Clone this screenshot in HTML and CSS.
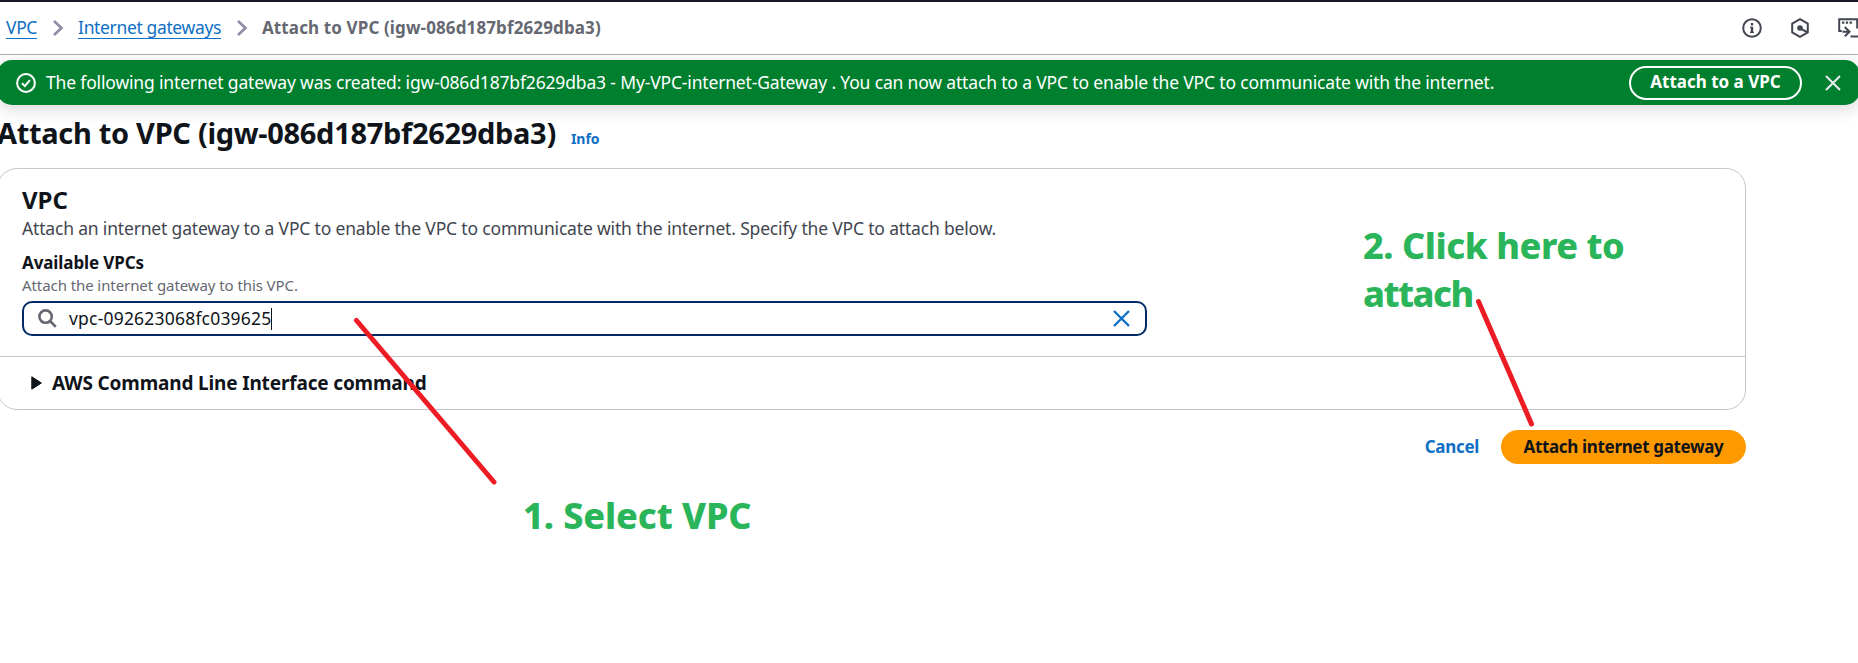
FILE: index.html
```
<!DOCTYPE html>
<html lang="en">
<head>
<meta charset="utf-8">
<title>Attach to VPC</title>
<link rel="stylesheet" href="styles.css">
</head>
<body>
<header class="topbar">
  <nav class="crumbs">
    <a class="crumb-link" href="#">VPC</a>
    <svg class="chevron" width="12" height="18" viewBox="0 0 12 18"><path d="M2 2l7.5 7L2 16"/></svg>
    <a class="crumb-link" href="#">Internet gateways</a>
    <svg class="chevron" width="12" height="18" viewBox="0 0 12 18"><path d="M2 2l7.5 7L2 16"/></svg>
    <span class="crumb-current">Attach to VPC (igw-086d187bf2629dba3)</span>
  </nav>
  <div class="tools">
    <svg width="20" height="20" viewBox="0 0 20 20"><circle cx="10" cy="10" r="8.8"/><path d="M10 8.8v6M10 5v2.4" stroke-width="2.4"/><path d="M8.2 9.4H10M8 14.3h4" stroke-width="1.2"/></svg>
    <svg width="20" height="20" viewBox="0 0 20 20"><path d="M10 1.2l7.8 4.3v9L10 18.8l-7.8-4.3v-9z"/><circle class="solid" cx="10" cy="10" r="2.8"/><path d="M11 10.8l6 3.2"/></svg>
    <svg width="21" height="20" viewBox="0 0 21 20"><path d="M3.8 13H1.2V1.2H19.2V10.5M12.5 18.5H21M4.5 13.7h6.5M6.8 9l4.7 4.7-4.7 4.5"/><path d="M4 4.7h2.3M7.8 4.7h2.3M11.6 4.7h2.3" stroke-width="2.3"/></svg>
  </div>
</header>

<section class="flash">
  <svg class="flash-icon" width="20" height="20" viewBox="0 0 20 20"><circle cx="10" cy="10" r="8.9"/><path d="M6 10.2l2.9 2.9 5-6"/></svg>
  <p class="flash-text">The following internet gateway was created: igw-086d187bf2629dba3 - My-VPC-internet-Gateway . You can now attach to a VPC to enable the VPC to communicate with the internet.</p>
  <button class="flash-button">Attach to a VPC</button>
  <svg class="flash-close" width="16" height="16" viewBox="0 0 16 16"><path d="M1 1l14 14M15 1L1 15"/></svg>
</section>

<main class="page">
  <div class="title-row">
    <h1 class="title">Attach to VPC (igw-086d187bf2629dba3)</h1>
    <a class="info" href="#">Info</a>
  </div>
  <section class="card">
    <div class="card-body">
      <h2 class="card-title">VPC</h2>
      <p class="card-desc">Attach an internet gateway to a VPC to enable the VPC to communicate with the internet. Specify the VPC to attach below.</p>
      <div class="label">Available VPCs</div>
      <div class="hint">Attach the internet gateway to this VPC.</div>
      <div class="field">
        <svg class="search" width="19" height="19" viewBox="0 0 19 19"><circle cx="7.6" cy="7.6" r="6.2"/><path d="M12 12l5.8 5.8"/></svg>
        <span class="value">vpc-092623068fc039625</span><span class="caret"></span>
        <svg class="clear" width="17" height="17" viewBox="0 0 17 17"><path d="M1 1l15 15M16 1L1 16"/></svg>
      </div>
    </div>
    <div class="card-footer">
      <svg width="11" height="14" viewBox="0 0 11 14"><path d="M.8.8v12.4L10.4 7z"/></svg>
      <span class="expand-label">AWS Command Line Interface command</span>
    </div>
  </section>
  <div class="actions">
    <a class="cancel" href="#">Cancel</a>
    <button class="primary">Attach internet gateway</button>
  </div>
</main>

<div class="note note-select">1. Select VPC</div>
<div class="note note-click"><span class="note-line">2. Click here to</span><br><span class="note-word">attach</span></div>
<svg class="pointers" width="1858" height="663" viewBox="0 0 1858 663"><path d="M356.5 320.5L494 482M1478.5 301.5L1531.5 424"/></svg>
</body>
</html>
```
FILE: styles.css
```
* { box-sizing: border-box; }
body {
  margin: 0;
  height: 663px;
  overflow: hidden;
  position: relative;
  background: #fff;
  color: #0f141a;
  font: 17px/22px "Noto Sans", sans-serif;
}
h1, h2, p { margin: 0; }
a { text-decoration: none; color: #0f6fc5; }
svg { display: block; flex: none; fill: none; overflow: visible; }
button { font: inherit; font-weight: 700; padding: 0; border: 0; white-space: nowrap; }

.topbar {
  display: flex;
  justify-content: space-between;
  align-items: center;
  height: 55px;
  padding-left: 6px;
  border-top: 2px solid #161826;
  border-bottom: 1px solid #b0b0ba;
}
.crumbs { display: flex; align-items: center; }
.crumb-link { border-bottom: 1px solid #0f6fc5; height: 22px; font-size: 17.5px; line-height: 21px; letter-spacing: -.36px; }
.chevron { margin: 0 14px 0 15px; stroke: #8c8ca3; stroke-width: 2.6; }
.crumb-current { color: #656871; font-weight: 700; letter-spacing: .12px; padding-bottom: 1px; }
.tools { display: flex; gap: 28px; margin-right: -1px; }
.tools svg { stroke: #424650; stroke-width: 2; }
.tools .solid { fill: #424650; stroke: none; }

.flash {
  display: flex;
  align-items: center;
  height: 45px;
  margin: 5px -2px 0 -3px;
  padding: 0 19px 0 19px;
  border-radius: 15px;
  background: #00802f;
  color: #fff;
  box-shadow: 0 4px 16px 1px rgba(0, 7, 22, .14);
}
.flash-icon { stroke: #fff; stroke-width: 2; }
.flash-text { flex: 1; padding: 0 0 2px 10px; font-size: 17.5px; letter-spacing: -.16px; white-space: nowrap; }
.flash-button {
  width: 173px;
  height: 34px;
  padding-bottom: 1px;
  border: 2px solid #fff;
  border-radius: 17px;
  background: transparent;
  color: #fff;
}
.flash-close { margin-left: 23px; stroke: #ebebf0; stroke-width: 2; }

.page { width: 1749px; margin: 8px 0 0 -3px; }
.title-row { display: flex; align-items: baseline; height: 40px; gap: 15px; }
.title { font-size: 29px; line-height: 40px; letter-spacing: -.31px; white-space: nowrap; }
.info { font-size: 14px; font-weight: 700; }

.card { margin-top: 15px; height: 242px; border: 1px solid #c6c6cd; border-radius: 20px; }
.card-body { height: 187px; padding: 16px 24px 0; }
.card-title { font-size: 24px; line-height: 30px; }
.card-desc { margin-top: 2px; color: #424650; font-size: 17.5px; letter-spacing: -.175px; }
.label { margin-top: 13px; font-weight: 700; letter-spacing: -.1px; }
.hint { margin-top: 2px; font-size: 15px; line-height: 18px; color: #656871; letter-spacing: -.08px; }
.field {
  display: flex;
  align-items: center;
  width: 1125px;
  height: 35px;
  margin-top: 7px;
  padding: 0 14px;
  border: 2px solid #002b66;
  border-radius: 10px;
}
.search { stroke: #656871; stroke-width: 2.6; }
.value { margin-left: 12px; padding-bottom: 1px; font-size: 17.5px; letter-spacing: .2px; }
.caret { width: 1px; height: 22px; background: #0f141a; }
.clear { margin-left: auto; margin-right: 1px; stroke: #0f6fc5; stroke-width: 2.4; }
.card-footer {
  display: flex;
  align-items: center;
  gap: 10px;
  height: 53px;
  padding-left: 33px;
  border-top: 1px solid #c6c6cd;
}
.card-footer svg { fill: #0f141a; stroke: #0f141a; stroke-linejoin: round; }
.expand-label { font-size: 19px; font-weight: 700; letter-spacing: -.16px; }

.actions { display: flex; justify-content: flex-end; align-items: center; gap: 22px; margin-top: 20px; }
.cancel { font-weight: 700; letter-spacing: -.3px; }
.primary { width: 245px; height: 34px; border-radius: 17px; background: #ff9900; color: #0f141a; letter-spacing: -.34px; }

.note { position: absolute; color: #2ab55a; font-size: 36px; font-weight: 800; line-height: 48px; white-space: nowrap; }
.note-select { left: 523px; top: 492px; letter-spacing: -.1px; }
.note-click { left: 1363px; top: 222px; }
.note-line { letter-spacing: -.45px; }
.note-word { letter-spacing: -1.5px; }
.pointers { position: absolute; left: 0; top: 0; stroke: #ed1c24; stroke-width: 5; stroke-linecap: round; pointer-events: none; }
```
